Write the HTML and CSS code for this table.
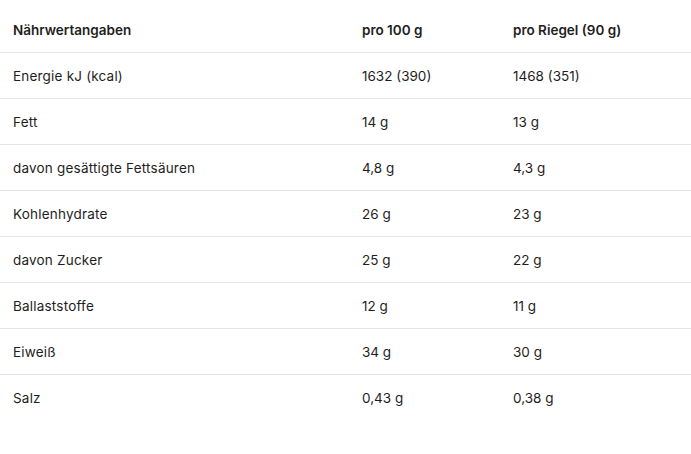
FILE: index.html
```html
<!DOCTYPE html>
<html lang="de">
<head>
<meta charset="utf-8">
<link rel="stylesheet" href="styles.css">
</head>
<body>
<table class="nutri">
  <thead>
    <tr><th>Nährwertangaben</th><th>pro 100 g</th><th>pro Riegel (90 g)</th></tr>
  </thead>
  <tbody>
    <tr><td>Energie kJ (kcal)</td><td>1632 (390)</td><td>1468 (351)</td></tr>
    <tr><td>Fett</td><td>14 g</td><td>13 g</td></tr>
    <tr><td>davon gesättigte Fettsäuren</td><td>4,8 g</td><td>4,3 g</td></tr>
    <tr><td>Kohlenhydrate</td><td>26 g</td><td>23 g</td></tr>
    <tr><td>davon Zucker</td><td>25 g</td><td>22 g</td></tr>
    <tr><td>Ballaststoffe</td><td>12 g</td><td>11 g</td></tr>
    <tr><td>Eiweiß</td><td>34 g</td><td>30 g</td></tr>
    <tr class="last"><td>Salz</td><td>0,43 g</td><td>0,38 g</td></tr>
  </tbody>
</table>
</body>
</html>
```
FILE: styles.css
```css
html, body {
  margin: 0;
  padding: 0;
  background: #ffffff;
}
body {
  font-family: "Inter", "Open Sans", sans-serif;
  font-size: 13.5px;
  color: #1e1e22;
  padding-top: 7px;
}
.nutri {
  width: 100%;
  border-collapse: collapse;
  table-layout: fixed;
}
.nutri th, .nutri td {
  text-align: left;
  height: 45px;
  padding: 0;
  vertical-align: middle;
  border-bottom: 1px solid #e4e4e4;
  white-space: nowrap;
}
.nutri th {
  font-weight: 600;
}
.nutri td:first-child {
  letter-spacing: 0.2px;
}
.nutri th:first-child, .nutri td:first-child {
  width: 349px;
  padding-left: 13px;
}
.nutri th:nth-child(2), .nutri td:nth-child(2) {
  width: 151px;
}
.nutri tr.last td {
  border-bottom: none;
}
```
